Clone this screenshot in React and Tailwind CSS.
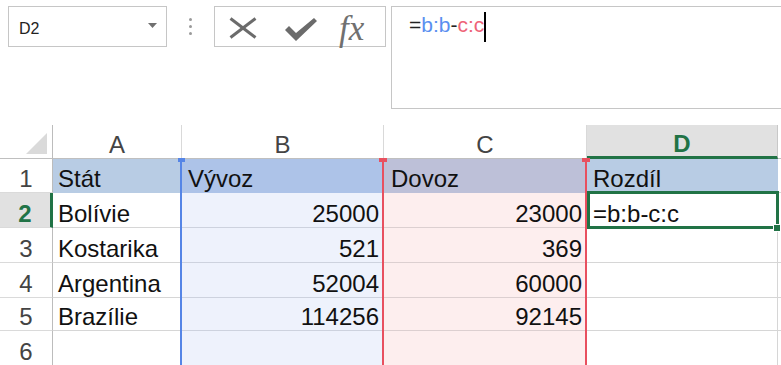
import React from "react";

const rows = [
  { n: "1", h: "h-[34px]", a: "Stát", b: "Vývoz", c: "Dovoz", d: "Rozdíl", head: true },
  { n: "2", h: "h-[35px]", a: "Bolívie", b: "25000", c: "23000", d: "=b:b-c:c", active: true },
  { n: "3", h: "h-[35px]", a: "Kostarika", b: "521", c: "369" },
  { n: "4", h: "h-[35px]", a: "Argentina", b: "52004", c: "60000" },
  { n: "5", h: "h-[33px]", a: "Brazílie", b: "114256", c: "92145" },
  { n: "6", h: "h-[35px]", a: "", b: "", c: "" },
];

function Row({ r }) {
  const head = r.head;
  return (
    <div className={`flex ${r.h}`}>
      <div
        className={`w-[53px] shrink-0 h-full flex items-end justify-center border-b border-b-[#dadada] ${
          r.active
            ? "bg-[#e1e1e1] border-r-[3px] border-r-[#217346] text-[#217346] font-bold"
            : "border-r border-r-[#bcbcbc] text-[#444]"
        }`}
      >
        <span className="leading-[27px]">{r.n}</span>
      </div>
      <div
        className={`w-[129px] shrink-0 h-full flex items-end pl-[5px] border-r border-b ${
          head ? "bg-[#b8cce4] border-[#b8cce4]" : "border-[#d6d6d6]"
        }`}
      >
        <span className="leading-[27px] whitespace-nowrap">{r.a}</span>
      </div>
      <div
        className={`w-[202px] shrink-0 h-full flex items-end border-r border-b ${
          head
            ? "bg-[#adc3e8] border-[#adc3e8] pl-[6px]"
            : "bg-[#eef2fc] border-[#cdd2de] justify-end pr-[4px]"
        }`}
      >
        <span className="leading-[27px]">{r.b}</span>
      </div>
      <div
        className={`w-[203px] shrink-0 h-full flex items-end border-r border-b ${
          head
            ? "bg-[#bdc0d8] border-[#bdc0d8] pl-[7px]"
            : "bg-[#fdeeee] border-[#dccfd0] justify-end pr-[4px]"
        }`}
      >
        <span className="leading-[27px]">{r.c}</span>
      </div>
      <div
        className={`w-[191px] shrink-0 h-full flex items-end pl-[6px] border-r border-b ${
          head ? "bg-[#b8cce4] border-[#b8cce4]" : "border-[#d6d6d6]"
        }`}
      >
        <span className="leading-[27px] whitespace-nowrap">{r.d || ""}</span>
      </div>
      <div className="flex-1 h-full border-b border-b-[#d6d6d6]" />
    </div>
  );
}

export default function App() {
  return (
    <div className="w-[781px] h-[365px] bg-white overflow-hidden font-['Liberation_Sans',Arial,sans-serif] text-[#111]">
      {/* Toolbar */}
      <div className="h-[125px] flex items-start pt-[6px]">
        <div className="ml-[8px] w-[159px] h-[41px] shrink-0 border border-[#c6c6c6] flex items-start justify-between pl-[10px] pr-[9px]">
          <span className="mt-[14px] text-[16px] leading-[16px] text-[#222]">D2</span>
          <svg className="mt-[16px]" width="9" height="5" viewBox="0 0 9 5">
            <polygon points="0,0 9,0 4.5,5" fill="#707070" />
          </svg>
        </div>
        <div className="ml-[22px] mt-[12px] w-[3px] shrink-0 flex flex-col gap-[4px]">
          <div className="w-[3px] h-[3px] rounded-full bg-[#9a9a9a]" />
          <div className="w-[3px] h-[3px] rounded-full bg-[#9a9a9a]" />
          <div className="w-[3px] h-[3px] rounded-full bg-[#9a9a9a]" />
        </div>
        <div className="ml-[22px] w-[172px] h-[41px] shrink-0 border border-[#c6c6c6] flex items-start">
          <svg className="ml-[14px] mt-[10px]" width="28" height="22" viewBox="0 0 28 22">
            <line x1="1.5" y1="1.5" x2="26.5" y2="20.5" stroke="#6b6b6b" strokeWidth="3" />
            <line x1="26.5" y1="1.5" x2="1.5" y2="20.5" stroke="#6b6b6b" strokeWidth="3" />
          </svg>
          <svg className="ml-[28px] mt-[11px]" width="32" height="23" viewBox="0 0 32 23">
            <polygon points="0,12 4,8 11,15 29,0 32,3 11,23" fill="#6b6b6b" />
          </svg>
          <span className="ml-[22px] mt-[4px] font-['Liberation_Serif',serif] italic text-[35px] leading-[35px] text-[#707070]">
            fx
          </span>
        </div>
        <div className="ml-[5px] flex-1 -mr-[10px] h-[103px] border border-[#c6c6c6] pl-[17px] pt-[6px] flex items-start">
          <span className="text-[21px] leading-[24px] whitespace-nowrap">
            <span className="text-[#222]">=</span>
            <span className="text-[#5a8ff0]">b:b</span>
            <span className="text-[#222]">-</span>
            <span className="text-[#ee6478]">c:c</span>
          </span>
          <span className="w-[2px] h-[30px] bg-black -mt-[1px]" />
        </div>
      </div>

      {/* Grid */}
      <div className="relative text-[24px]">
        <div className="flex h-[34px] text-[#444]">
          <div className="w-[53px] shrink-0 h-full border-r border-r-[#bcbcbc] border-b border-b-[#bfbfbf] flex items-end justify-end pr-[5px] pb-[4px]">
            <svg width="21" height="21" viewBox="0 0 21 21">
              <polygon points="21,0 21,21 0,21" fill="#dadada" />
            </svg>
          </div>
          <div className="w-[129px] shrink-0 h-full border-r border-r-[#d9d9d9] border-b border-b-[#bfbfbf] flex items-end justify-center">
            <span className="leading-[27px]">A</span>
          </div>
          <div className="w-[202px] shrink-0 h-full border-r border-r-[#d9d9d9] border-b border-b-[#bfbfbf] flex items-end justify-center">
            <span className="leading-[27px]">B</span>
          </div>
          <div className="w-[203px] shrink-0 h-full border-r border-r-[#d9d9d9] border-b border-b-[#bfbfbf] flex items-end justify-center">
            <span className="leading-[27px]">C</span>
          </div>
          <div className="w-[191px] shrink-0 h-full bg-[#e1e1e1] border-r border-r-[#c8c8c8] border-b-[3px] border-b-[#217346] flex items-end justify-center text-[#217346] font-bold">
            <span className="leading-[25px]">D</span>
          </div>
          <div className="flex-1 h-full border-b border-b-[#bfbfbf]" />
        </div>
        {rows.map((r) => (
          <Row key={r.n} r={r} />
        ))}

        {/* Range highlight borders */}
        <div className="absolute left-[180px] top-[33px] bottom-0 w-[2px] bg-[#5585e6]" />
        <div className="absolute left-[178px] top-[33px] w-[7px] h-[4px] bg-[#5585e6]" />
        <div className="absolute left-[382px] top-[33px] bottom-0 w-[2px] bg-[#e8505f]" />
        <div className="absolute left-[379px] top-[33px] w-[8px] h-[4px] bg-[#e8505f]" />
        <div className="absolute left-[585px] top-[33px] bottom-0 w-[2px] bg-[#e8505f]" />
        <div className="absolute left-[582px] top-[33px] w-[8px] h-[4px] bg-[#e8505f]" />

        {/* Active cell */}
        <div className="absolute left-[587px] top-[66px] w-[192px] h-[38px] border-[3px] border-[#217346]" />
        <div className="absolute left-[773px] top-[99px] w-[8px] h-[8px] bg-[#217346] border border-white" />
      </div>
    </div>
  );
}
